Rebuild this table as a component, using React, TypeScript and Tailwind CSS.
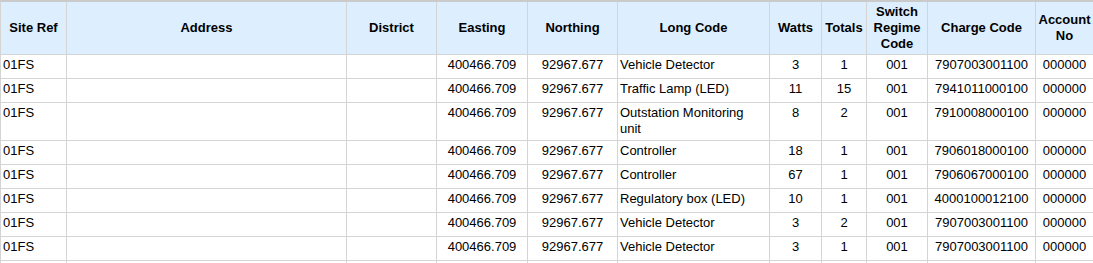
import React from "react";

type Row = {
  site: string;
  address: string;
  district: string;
  easting: string;
  northing: string;
  longCode: string;
  watts: string;
  totals: string;
  regime: string;
  charge: string;
  account: string;
};

const rows: Row[] = [
  { site: "01FS", address: "", district: "", easting: "400466.709", northing: "92967.677", longCode: "Vehicle Detector", watts: "3", totals: "1", regime: "001", charge: "7907003001100", account: "000000" },
  { site: "01FS", address: "", district: "", easting: "400466.709", northing: "92967.677", longCode: "Traffic Lamp (LED)", watts: "11", totals: "15", regime: "001", charge: "7941011000100", account: "000000" },
  { site: "01FS", address: "", district: "", easting: "400466.709", northing: "92967.677", longCode: "Outstation Monitoring unit", watts: "8", totals: "2", regime: "001", charge: "7910008000100", account: "000000" },
  { site: "01FS", address: "", district: "", easting: "400466.709", northing: "92967.677", longCode: "Controller", watts: "18", totals: "1", regime: "001", charge: "7906018000100", account: "000000" },
  { site: "01FS", address: "", district: "", easting: "400466.709", northing: "92967.677", longCode: "Controller", watts: "67", totals: "1", regime: "001", charge: "7906067000100", account: "000000" },
  { site: "01FS", address: "", district: "", easting: "400466.709", northing: "92967.677", longCode: "Regulatory box (LED)", watts: "10", totals: "1", regime: "001", charge: "4000100012100", account: "000000" },
  { site: "01FS", address: "", district: "", easting: "400466.709", northing: "92967.677", longCode: "Vehicle Detector", watts: "3", totals: "2", regime: "001", charge: "7907003001100", account: "000000" },
  { site: "01FS", address: "", district: "", easting: "400466.709", northing: "92967.677", longCode: "Vehicle Detector", watts: "3", totals: "1", regime: "001", charge: "7907003001100", account: "000000" },
  { site: "", address: "", district: "", easting: "", northing: "", longCode: "", watts: "", totals: "", regime: "", charge: "", account: "" },
];

const headers: { label: React.ReactNode }[] = [
  { label: "Site Ref" },
  { label: "Address" },
  { label: "District" },
  { label: "Easting" },
  { label: "Northing" },
  { label: "Long Code" },
  { label: "Watts" },
  { label: "Totals" },
  { label: (<>Switch<br />Regime<br />Code</>) },
  { label: "Charge Code" },
  { label: (<>Account<br />No</>) },
];

const gridCols =
  "grid grid-cols-[66px_280px_90px_91px_90px_152px_52px_45px_61px_108px_58px]";

const cellBase =
  "border-r border-b border-[#d4d4d4] pt-[2px] pb-[3px] px-[2px] leading-[16px] min-h-[24px]";

export default function App() {
  return (
    <div
      className="bg-white text-black text-[13px] w-[1094px]"
      style={{ fontFamily: '"Liberation Sans", Arial, sans-serif' }}
    >
      <div className={`${gridCols} border-t-2 border-l border-t-[#cacaca] border-l-[#d4d4d4]`}>
        {headers.map((h, i) => (
          <div
            key={i}
            className="bg-[#ddeeff] border-r border-b border-[#d4d4d4] h-[53px] flex items-center justify-center text-center font-bold leading-[16px] px-[2px]"
          >
            <span>{h.label}</span>
          </div>
        ))}
        {rows.map((r, i) => (
          <React.Fragment key={i}>
            <div className={`${cellBase} text-left`}>{r.site}</div>
            <div className={`${cellBase} text-left`}>{r.address}</div>
            <div className={`${cellBase} text-left`}>{r.district}</div>
            <div className={`${cellBase} text-center`}>{r.easting}</div>
            <div className={`${cellBase} text-center`}>{r.northing}</div>
            <div className={`${cellBase} text-left pr-[3px]`}>{r.longCode}</div>
            <div className={`${cellBase} text-center`}>{r.watts}</div>
            <div className={`${cellBase} text-center`}>{r.totals}</div>
            <div className={`${cellBase} text-center`}>{r.regime}</div>
            <div className={`${cellBase} text-center`}>{r.charge}</div>
            <div className={`${cellBase} text-center`}>{r.account}</div>
          </React.Fragment>
        ))}
      </div>
    </div>
  );
}
